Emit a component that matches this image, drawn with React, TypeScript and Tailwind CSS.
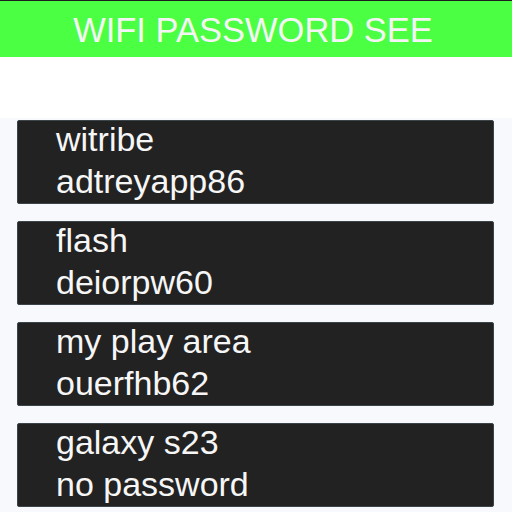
const networks = [
  { name: "witribe", password: "adtreyapp86" },
  { name: "flash", password: "deiorpw60" },
  { name: "my play area", password: "ouerfhb62" },
  { name: "galaxy s23", password: "no password" },
];

export default function App() {
  return (
    <div className="flex h-[512px] w-[512px] flex-col overflow-hidden bg-[#f8f9fc] font-['Liberation_Sans',Arial,sans-serif]">
      <div className="h-px bg-[#1e1e1e]" />
      <header className="flex h-[56px] items-center justify-center bg-[#4bff42] pr-[6px] pt-[2px]">
        <h1 className="text-[34.5px] leading-none text-[#f4f4f4]">WIFI PASSWORD SEE</h1>
      </header>
      <div className="h-[61px] bg-white" />
      <main className="flex flex-col gap-[17px] pt-[2px] pl-[17px] pr-[18px]">
        {networks.map((n) => (
          <div
            key={n.name}
            className="flex h-[84px] flex-col gap-[6px] rounded-[2px] border border-[#3b4448] bg-[#222222] pl-[38px] text-[34px] leading-[36px] text-[#f6f6f6]"
          >
            <span>{n.name}</span>
            <span>{n.password}</span>
          </div>
        ))}
      </main>
    </div>
  );
}
